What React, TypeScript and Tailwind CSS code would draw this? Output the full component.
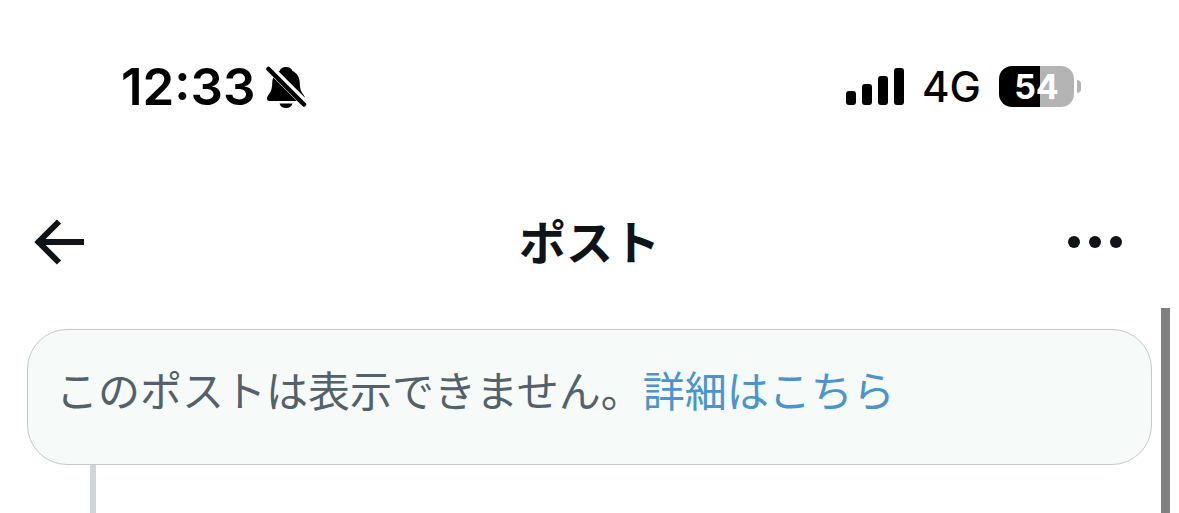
const signalBars = ["h-[14px]", "h-[21px]", "h-[29px]", "h-[37px]"];

function BellOff() {
    return (
        <svg viewBox="0 0 42 46" className="h-[46px] w-[42px]" aria-label="Silent mode">
            <path
                d="M20 3c-3.200 0-5.500 1.500-6.500 4C9 9 6.500 13 6.200 19c-.2 5.500-1 8-3 10.800C1.600 32 1 33.300 1 34.600c0 1.500.8 2.400 2.200 2.400h33.600c1.400 0 2.200-.9 2.200-2.400 0-1.300-.6-2.600-2.200-4.800-2-2.800-2.800-5.300-3-10.800C33.500 13 31 9 26.500 7 25.500 4.500 23.200 3 20 3z"
                fill="#000"
            />
            <path d="M13.500 39.500h13c-.8 3-3.300 4.500-6.500 4.500s-5.700-1.500-6.500-4.500z" fill="#000" />
            <path d="M0 .5 43 43.500" stroke="#fff" strokeWidth="8" />
            <path d="M2.500 5 38 40.500" stroke="#000" strokeWidth="4.500" strokeLinecap="round" />
        </svg>
    );
}

function Battery() {
    return (
        <div className="flex items-center gap-[3px]">
            <div className="flex h-[41px] w-[75px] items-center justify-center rounded-[13px] bg-linear-to-r from-black from-55% to-[#b4b4b4] to-55% text-[34px] leading-none font-bold text-white">
                54
            </div>
            <div className="h-[13px] w-1 rounded-r-full bg-[#b4b4b4]" />
        </div>
    );
}

function StatusBar() {
    return (
        <div className="flex h-44 items-center justify-between pr-[98px] pb-[3px] pl-[121px] font-['Inter',sans-serif] text-black">
            <div className="flex items-center gap-2.5">
                <span className="text-[51px] leading-none font-semibold">12:33</span>
                <BellOff />
            </div>
            <div className="flex items-center gap-[18px]">
                <div className="flex items-end gap-1.5">
                    {signalBars.map((height) => (
                        <div key={height} className={`w-2.5 rounded-[3px] bg-black ${height}`} />
                    ))}
                </div>
                <span className="text-[42px] leading-none font-medium">4G</span>
                <Battery />
            </div>
        </div>
    );
}

function Header() {
    return (
        <header className="grid h-[132px] grid-cols-[1fr_auto_1fr] items-center text-[#0f1419]">
            <button type="button" aria-label="戻る" className="justify-self-start pl-[34px]">
                <svg viewBox="0 0 52 46" className="h-[46px] w-[52px]" fill="none" stroke="currentColor" strokeWidth="6">
                    <path d="M25 2.500 4.500 23 25 43.500M4.500 23H50" />
                </svg>
            </button>
            <h1 className="pb-1.5 text-[47px] leading-none font-bold">ポスト</h1>
            <button type="button" aria-label="その他" className="justify-self-end pr-14">
                <svg viewBox="0 0 56 14" className="h-[14px] w-[56px]" fill="currentColor">
                    <circle cx="7" cy="7" r="6" />
                    <circle cx="28" cy="7" r="6" />
                    <circle cx="49" cy="7" r="6" />
                </svg>
            </button>
        </header>
    );
}

export default function App() {
    return (
        <div className="flex h-screen flex-col overflow-hidden bg-white font-['Noto_Sans_CJK_JP',sans-serif]">
            <StatusBar />
            <Header />
            <main className="flex flex-1 gap-[9px] pr-[9px] pl-[27px]">
                <div className="flex flex-1 flex-col pt-[21px]">
                    <p className="rounded-[40px] border border-[#c4c9ca] bg-[#f6faf9] px-7 pt-6 pb-10 text-[42px] leading-[70px] text-[#53616a]">
                        このポストは表示できません。
                        <a href="#" className="text-[#4a94d0]">詳細はこちら</a>
                    </p>
                    <div className="ml-[63px] w-1.5 flex-1 bg-[#cfd6da]" />
                </div>
                <div className="w-[9px] bg-[#808080]" />
            </main>
        </div>
    );
}
